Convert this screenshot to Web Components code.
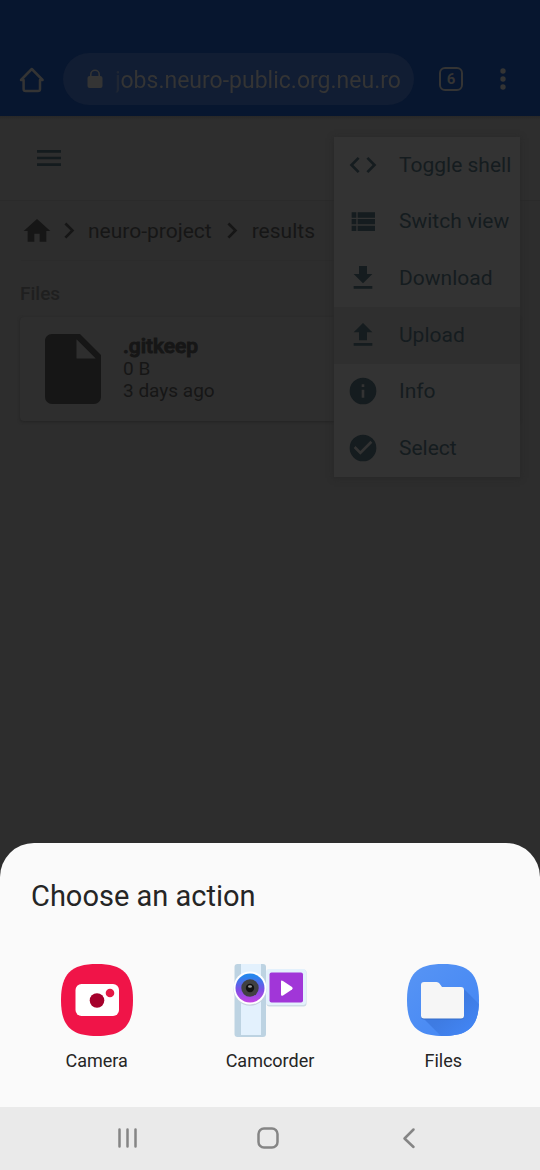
<!DOCTYPE html>
<html lang="en">
<head>
<meta charset="utf-8">
<meta name="viewport" content="width=device-width, initial-scale=1">
<title>Choose an action</title>
<style>
  html, body { margin: 0; }
  body { background: #2d2d2d; font-family: Roboto, "Liberation Sans", sans-serif; color: #161616; }
</style>
</head>
<body>
<phone-screen></phone-screen>
<script>
const reset = `
  *, *::before, *::after { box-sizing: border-box; }
  button { appearance: none; border: 0; margin: 0; padding: 0; background: none; color: inherit; font: inherit; cursor: pointer; }
  a { color: inherit; text-decoration: none; }
  svg { display: block; flex: none; }
`;

function define(name, css, html) {
  const template = document.createElement('template');
  template.innerHTML = `<style>${reset}${css}</style>${html}`;
  customElements.define(name, class extends HTMLElement {
    constructor() {
      super();
      this.attachShadow({ mode: 'open' }).append(template.content.cloneNode(true));
    }
  });
}

define('browser-bar', `
  :host { display: flex; align-items: center; gap: 18px; padding: 53px 25px 11px 18px; background: #07162f; color: #343434; }
  .address { flex: 1; min-width: 0; display: flex; align-items: center; height: 52px; padding: 0 11px 0 22px; border-radius: 26px; background: #111d33; }
  input { flex: 1; min-width: 0; border: 0; outline: 0; padding: 2px 0 0; margin-left: 10px; height: 34px; background: none; color: inherit; font: 23px/32px Roboto, "Liberation Sans", sans-serif;
    -webkit-mask-image: linear-gradient(to right, transparent, #000 6px); mask-image: linear-gradient(to right, transparent, #000 6px); }
  .tabs { width: 24px; height: 24px; margin-left: 7px; border: 2px solid; border-radius: 6px; font-size: 15px; font-weight: 700; line-height: 20px; text-align: center; }
  .more { margin-left: 10px; }
`, `
  <button aria-label="Home"><svg width="27" height="27" viewBox="0 0 27 27" fill="none" stroke="currentColor" stroke-width="2.5" stroke-linejoin="round" stroke-linecap="round"><path d="M3 14 13.800 3 24.600 14H22V23.200Q22 25 20 25H7.600Q5.600 25 5.600 23.200V14Z"/></svg></button>
  <div class="address">
    <svg width="20" height="22" viewBox="0 0 20 22"><path fill="currentColor" d="M5 8V6.500a5 5 0 0 1 10 0V8h.5A2 2 0 0 1 17.500 10v8a2 2 0 0 1-2 2h-11a2 2 0 0 1-2-2v-8a2 2 0 0 1 2-2zM6.600 8h6.800V6.300a3.400 3.400 0 0 0-6.800 0z"/></svg>
    <input aria-label="Address" value="jobs.neuro-public.org.neu.ro" readonly>
  </div>
  <button class="tabs" aria-label="6 open tabs">6</button>
  <button class="more" aria-label="More"><svg width="24" height="24" viewBox="0 0 24 24" fill="currentColor"><circle cx="12" cy="4" r="2.700"/><circle cx="12" cy="12" r="2.700"/><circle cx="12" cy="20" r="2.700"/></svg></button>
`);

define('app-toolbar', `
  :host { display: flex; align-items: center; height: 85px; padding-left: 33px; background: linear-gradient(#282828, #2e2e2e 4px); border-bottom: 1px solid #2a2a2a; color: #141b1e; }
`, `
  <button aria-label="Menu"><svg width="32" height="32" viewBox="0 0 24 24" fill="currentColor"><path d="M3 18h18v-2H3zM3 13h18v-2H3zM3 6v2h18V6z"/></svg></button>
`);

define('path-trail', `
  :host { display: block; padding: 0 21px; }
  nav { display: flex; align-items: center; height: 60px; border-bottom: 1px solid #2b2b2b; font-size: 21px; line-height: 28px; }
  .sep { margin: 0 4px; }
  .root { margin-right: 3px; }
`, `
  <nav aria-label="Path">
    <a href="#home" aria-label="Home"><svg width="32" height="32" viewBox="0 0 24 24" fill="currentColor"><path d="M10 20v-6h4v6h5v-8h3L12 3 2 12h3v8z"/></svg></a>
    <svg class="root" width="32" height="32" viewBox="0 0 24 24" fill="currentColor"><path d="M8.600 16.300 13.200 11.700 8.600 7.100 10 5.700l6 6-6 6z"/></svg>
    <a href="#neuro-project">neuro-project</a>
    <svg class="sep" width="32" height="32" viewBox="0 0 24 24" fill="currentColor"><path d="M8.600 16.300 13.200 11.700 8.600 7.100 10 5.700l6 6-6 6z"/></svg>
    <a href="#results">results</a>
  </nav>
`);

define('file-card', `
  :host { display: flex; align-items: center; gap: 8px; height: 104px; padding-left: 11px; border-radius: 4px; background: #2e2e2e; box-shadow: 0 1px 3px #242424; font-size: 19px; line-height: 22px; color: #161616; }
  .name { margin: 0; font-size: 21px; line-height: 24px; font-weight: 500; -webkit-text-stroke: 1px; }
  .text { padding-bottom: 2px; }
  p { margin: 0; }
`, `
  <svg width="84" height="84" viewBox="0 0 24 24" fill="currentColor"><path d="M13 9V3.500L18.500 9M6 2c-1.110 0-2 .89-2 2v16a2 2 0 0 0 2 2h12a2 2 0 0 0 2-2V8l-6-6z"/></svg>
  <div class="text"><h3 class="name"><slot name="name"></slot></h3><p><slot name="size"></slot></p><p><slot name="age"></slot></p></div>
`);

define('file-list', `
  :host { display: block; padding: 20px 20px 0; }
  h2 { margin: 0 0 10px; font-size: 19px; line-height: 26px; font-weight: 500; color: #1f1f1f; }
`, `
  <h2>Files</h2>
  <file-card><span slot="name">.gitkeep</span><span slot="size">0 B</span><span slot="age">3 days ago</span></file-card>
`);

define('menu-item', `
  :host { display: grid; }
  :host([active]) { background: #2f2f2f; }
  button { display: flex; align-items: center; gap: 20px; padding: 0 0 1px 13px; text-align: left; white-space: nowrap; }
`, `<button role="menuitem"><slot name="icon"></slot><slot></slot></button>`);

const actions = [
  ['Toggle shell', 'M9.400 16.600 4.800 12l4.600-4.600L8 6l-6 6 6 6zm5.200 0 4.600-4.600-4.600-4.600L16 6l6 6-6 6z'],
  ['Switch view', 'M3.500 14.500H7v-4H3.500zM3.500 19.500H7v-4H3.500zM3.500 9.500H7v-4H3.500zM8 14.500h13v-4H8zM8 19.500h13v-4H8zM8 5.500v4h13v-4z'],
  ['Download', 'M19 9h-4V3H9v6H5l7 7zM5 18v2h14v-2z'],
  ['Upload', 'M9 16h6v-6h4l-7-7-7 7h4zM5 18h14v2H5z'],
  ['Info', 'M12 2a10 10 0 1 0 0 20 10 10 0 0 0 0-20zm1 15h-2v-6h2zm0-8h-2V7h2z'],
  ['Select', 'M12 2a10 10 0 1 0 0 20 10 10 0 0 0 0-20zm-2 15-5-5 1.410-1.410L10 14.170l7.590-7.590L19 8z']
];
define('action-menu', `
  :host { display: grid; grid-template-rows: repeat(6, 1fr); height: 340px; width: 186px; background: #333; box-shadow: 0 1px 6px #272727; color: #151c1f; font-size: 21px; line-height: 28px; }
`, actions.map(([label, path]) => `<menu-item${label === 'Upload' ? ' active' : ''}><svg slot="icon" width="32" height="32" viewBox="0 0 24 24" fill="currentColor"><path d="${path}"/></svg>${label}</menu-item>`).join(''));

define('sheet-app', `
  :host { display: grid; justify-items: center; }
  button { display: grid; justify-items: center; gap: 11px; font-size: 18px; line-height: 24px; }
`, `<button><slot name="icon"></slot><slot></slot></button>`);

define('action-sheet', `
  :host { display: block; height: 264px; padding-top: 33px; border-radius: 34px 34px 0 0; background: #fafafa; color: #252525; }
  h1 { margin: 0 31px; font-size: 29px; line-height: 40px; font-weight: 400; }
  .apps { display: grid; grid-template-columns: repeat(3, 1fr); padding: 46px 10px 0; }
`, `
  <h1>Choose an action</h1>
  <div class="apps">
    <sheet-app>
      <svg slot="icon" width="76" height="76" viewBox="0 0 76 76">
        <path fill="#f01448" d="M38 2C64 2 74 12 74 38S64 74 38 74 2 64 2 38 12 2 38 2z"/>
        <rect x="16.500" y="22" width="43.500" height="32" rx="6" fill="#fff"/>
        <circle cx="38" cy="38.500" r="7.300" fill="#a5002b"/><circle cx="51" cy="31" r="4.300" fill="#e41944"/>
      </svg>Camera
    </sheet-app>
    <sheet-app>
      <svg slot="icon" width="76" height="76" viewBox="0 0 76 76">
        <defs><linearGradient id="lens" x2="0" y2="1"><stop offset=".1" stop-color="#2686ed"/><stop offset=".55" stop-color="#7c50e5"/><stop offset="1" stop-color="#c541e3"/></linearGradient></defs>
        <rect x="2.500" y="2" width="31.500" height="73" rx="3" fill="#bdd3e2"/>
        <path fill="#e3f1fd" d="M9 2h20v71H9z"/>
        <rect x="34.500" y="7.500" width="40" height="37" rx="3" fill="#cedce5"/>
        <rect x="34" y="7" width="40" height="36" rx="3" fill="#e4f1fc"/>
        <rect x="37.500" y="10.500" width="33.500" height="30" rx="2" fill="#a136d8"/>
        <path d="M49 19.500v13q0 2 2 1l9-6q1.500-1.200 0-2.400l-9-6q-2-1.200-2 .4z" fill="#fff"/>
        <circle cx="18" cy="27.300" r="16.500" fill="#c6d2df"/><circle cx="18" cy="26" r="16.500" fill="#fff"/>
        <circle cx="18" cy="26" r="14.500" fill="url(#lens)"/><circle cx="18" cy="26" r="8.700" fill="#414141"/><circle cx="18" cy="26" r="4.200" fill="#111"/><ellipse cx="18" cy="24.500" rx="2" ry="1.200" fill="#999"/>
      </svg>Camcorder
    </sheet-app>
    <sheet-app>
      <svg slot="icon" width="76" height="76" viewBox="0 0 76 76">
        <defs>
          <linearGradient id="blue" x2="1" y2="1"><stop stop-color="#5895f4"/><stop offset="1" stop-color="#4285f4"/></linearGradient>
          <linearGradient id="cast" x1=".2" y1=".2" x2=".85" y2=".85"><stop offset=".4" stop-color="#3e7be2"/><stop offset="1" stop-color="#4285f4"/></linearGradient>
          <clipPath id="squircle"><path d="M38 2C64 2 74 12 74 38S64 74 38 74 2 64 2 38 12 2 38 2z"/></clipPath>
        </defs>
        <g clip-path="url(#squircle)"><path fill="url(#blue)" d="M0 0h76v76H0z"/><path fill="url(#cast)" d="M17 55 58 26 76 44v32H38z"/></g>
        <path fill="#356cc8" d="M19 22h12q2 0 3 1.500l3 4h19q3 0 3 3v24q0 3-3 3H19q-3 0-3-3V25q0-3 3-3z"/>
        <path fill="#f6f6f6" d="M19 20h12.500q2 0 3 1.500l2.500 3.500h19q3 0 3 3v25.500q0 3-3 3H19q-3 0-3-3V23q0-3 3-3z"/>
      </svg>Files
    </sheet-app>
  </div>
`);

define('system-nav', `
  :host { display: flex; align-items: center; justify-content: center; gap: 109px; height: 63px; padding: 0 4px 2px 0; background: #eaeaea; color: #858585; }
  svg { fill: none; stroke: currentColor; stroke-width: 2.5; stroke-linecap: round; stroke-linejoin: round; }
`, `
  <button aria-label="Recent apps"><svg width="32" height="32" viewBox="0 0 32 32"><path d="M8.500 7.500v17M16.500 7.500v17M24.500 7.500v17"/></svg></button>
  <button aria-label="Home"><svg width="32" height="32" viewBox="0 0 32 32"><rect x="6.500" y="6.500" width="19" height="19" rx="5.500"/></svg></button>
  <button aria-label="Back"><svg width="32" height="32" viewBox="0 0 32 32"><path d="M20.500 7.500 11.500 16.500 20.500 25"/></svg></button>
`);

define('phone-screen', `
  :host { display: flex; flex-direction: column; min-height: 100vh; }
  main { position: relative; flex: 1; background: #2d2d2d; }
  action-menu { position: absolute; top: 21px; right: 20px; }
`, `
  <browser-bar></browser-bar>
  <main><app-toolbar></app-toolbar><path-trail></path-trail><file-list></file-list><action-menu role="menu"></action-menu></main>
  <action-sheet></action-sheet>
  <system-nav></system-nav>
`);
</script>
</body>
</html>
